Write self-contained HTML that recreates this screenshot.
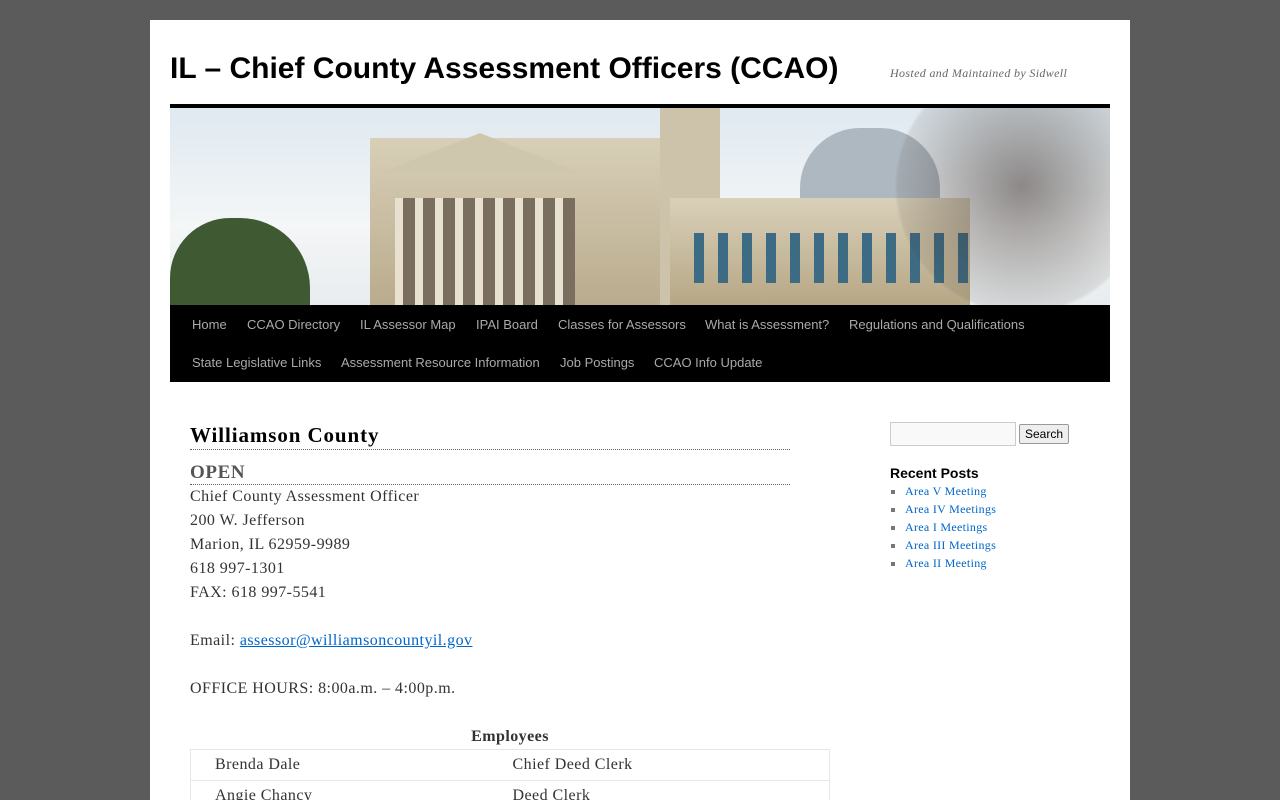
<!DOCTYPE html>
<html><head><meta charset="utf-8">
<style>
*{margin:0;padding:0;box-sizing:border-box}
html,body{overflow:hidden}
body{background:#5b5b5b;width:1280px;height:800px;font-family:"Liberation Serif",serif}
#wrap{position:absolute;left:150px;top:20px;width:980px;height:780px;background:#fff;overflow:hidden}
h1.site{position:absolute;left:20px;top:32px;font:bold 30px "Liberation Sans",Arial,sans-serif;color:#000}
.desc{position:absolute;left:740px;top:46px;font:italic 12px "Liberation Serif",serif;color:#666;letter-spacing:0.35px}
.bar{position:absolute;left:20px;top:84px;width:940px;height:4px;background:#000}
.hero{position:absolute;left:20px;top:88px;width:940px;height:197px;overflow:hidden;background:linear-gradient(#dfe9f0,#f4f6f7 60%,#e8ecee)}
.nav{position:absolute;left:20px;top:285px;width:940px;height:77px;background:#000}
.nav a{position:absolute;font:13px "Liberation Sans",Arial,sans-serif;color:#aaa;text-decoration:none;white-space:nowrap}
.main{position:absolute;left:40px;top:400px;width:600px;color:#333;font-size:16px;line-height:24px}
.h2{font:bold 21px "Liberation Serif",serif;letter-spacing:0.9px;color:#000;border-bottom:1px dotted #666;height:30px;padding-top:3px;width:600px}
.h3{font:bold 19px "Liberation Serif",serif;letter-spacing:0.6px;color:#555;border-bottom:1px dotted #666;width:600px;margin-top:10px;height:25px;padding-top:2px}
.main p{font-size:16px;letter-spacing:0.45px}
a.l{color:#0066cc}
table{border-collapse:collapse;width:640px;border:1px solid #e7e7e7;font-size:16px;color:#333;letter-spacing:0.45px}
td{border-top:1px solid #e7e7e7;padding:0 24px;height:30px;line-height:30px}
.side{position:absolute;left:740px;top:402px}
.side input{width:126px;height:24px;border:1px solid #ccc;background:#f9f9f9;vertical-align:top}
.side button{height:20px;font:12px "Liberation Sans",Arial,sans-serif;padding:0 5px;border:1px solid #999;border-radius:2px;background:#eee;margin-left:3px;margin-top:2px;vertical-align:top}
.side h4{font:bold 14px "Liberation Sans",Arial,sans-serif;color:#000;margin-top:19px}
.side ul{list-style:square;margin-left:15px;color:#777;font-size:12px;line-height:18px;letter-spacing:0.3px;margin-top:1px}
.side li a{color:#0066cc;text-decoration:none}
</style></head><body>
<div id="wrap">
<h1 class="site">IL – Chief County Assessment Officers (CCAO)</h1>
<div class="desc">Hosted and Maintained by Sidwell</div>
<div class="bar"></div>
<div class="hero">
 <div style="position:absolute;left:0;top:110px;width:140px;height:90px;border-radius:60px 70px 0 0;background:#3f5a33"></div>
 <div style="position:absolute;left:200px;top:30px;width:300px;height:170px;background:linear-gradient(#d8cfb8,#b9ab8c)"></div>
 <div style="position:absolute;left:210px;top:25px;width:200px;height:40px;background:#cfc6ae;clip-path:polygon(0 100%,50% 0,100% 100%)"></div>
 <div style="position:absolute;left:225px;top:90px;width:180px;height:110px;background:repeating-linear-gradient(90deg,#e8e1cf 0 8px,#7a6f5e 8px 20px)"></div>
 <div style="position:absolute;left:490px;top:0;width:60px;height:200px;background:#cdc3aa"></div>
 <div style="position:absolute;left:500px;top:90px;width:300px;height:110px;background:linear-gradient(#d9d0b9,#b5a684)"></div>
 <div style="position:absolute;left:510px;top:125px;width:290px;height:50px;background:repeating-linear-gradient(90deg,transparent 0 14px,#3d6b83 14px 24px)"></div>
 <div style="position:absolute;left:630px;top:20px;width:140px;height:70px;border-radius:60px 60px 0 0;background:#aeb8c0"></div>
 <div style="position:absolute;left:720px;top:0;width:220px;height:197px;background:radial-gradient(circle at 60% 40%,rgba(60,50,45,.55),rgba(60,50,45,.1) 70%,transparent 72%)"></div>
</div>
<div class="nav">
 <a style="left:22px;top:12px">Home</a><a style="left:77px;top:12px">CCAO Directory</a><a style="left:190px;top:12px">IL Assessor Map</a><a style="left:306px;top:12px">IPAI Board</a><a style="left:388px;top:12px">Classes for Assessors</a><a style="left:535px;top:12px">What is Assessment?</a><a style="left:679px;top:12px">Regulations and Qualifications</a>
 <a style="left:22px;top:50px">State Legislative Links</a><a style="left:171px;top:50px">Assessment Resource Information</a><a style="left:390px;top:50px">Job Postings</a><a style="left:484px;top:50px">CCAO Info Update</a>
</div>
<div class="main">
 <div class="h2">Williamson County</div>
 <div class="h3">OPEN</div>
 <p>Chief County Assessment Officer<br>200 W. Jefferson<br>Marion, IL 62959-9989<br>618 997-1301<br>FAX: 618 997-5541</p>
 <p style="margin-top:24px">Email: <a class="l" href="#">assessor@williamsoncountyil.gov</a></p>
 <p style="margin-top:24px">OFFICE HOURS: 8:00a.m. – 4:00p.m.</p>
 <p style="margin-top:24px;width:640px;text-align:center;font-weight:bold">Employees</p>
 <table><tr><td style="border-top:0;width:298px">Brenda Dale</td><td style="border-top:0">Chief Deed Clerk</td></tr><tr><td>Angie Chancy</td><td>Deed Clerk</td></tr></table>
</div>
<div class="side">
 <input type="text"><button>Search</button>
 <h4>Recent Posts</h4>
 <ul><li><a href="#">Area V Meeting</a></li><li><a href="#">Area IV Meetings</a></li><li><a href="#">Area I Meetings</a></li><li><a href="#">Area III Meetings</a></li><li><a href="#">Area II Meeting</a></li></ul>
</div>
</div>
</body></html>
